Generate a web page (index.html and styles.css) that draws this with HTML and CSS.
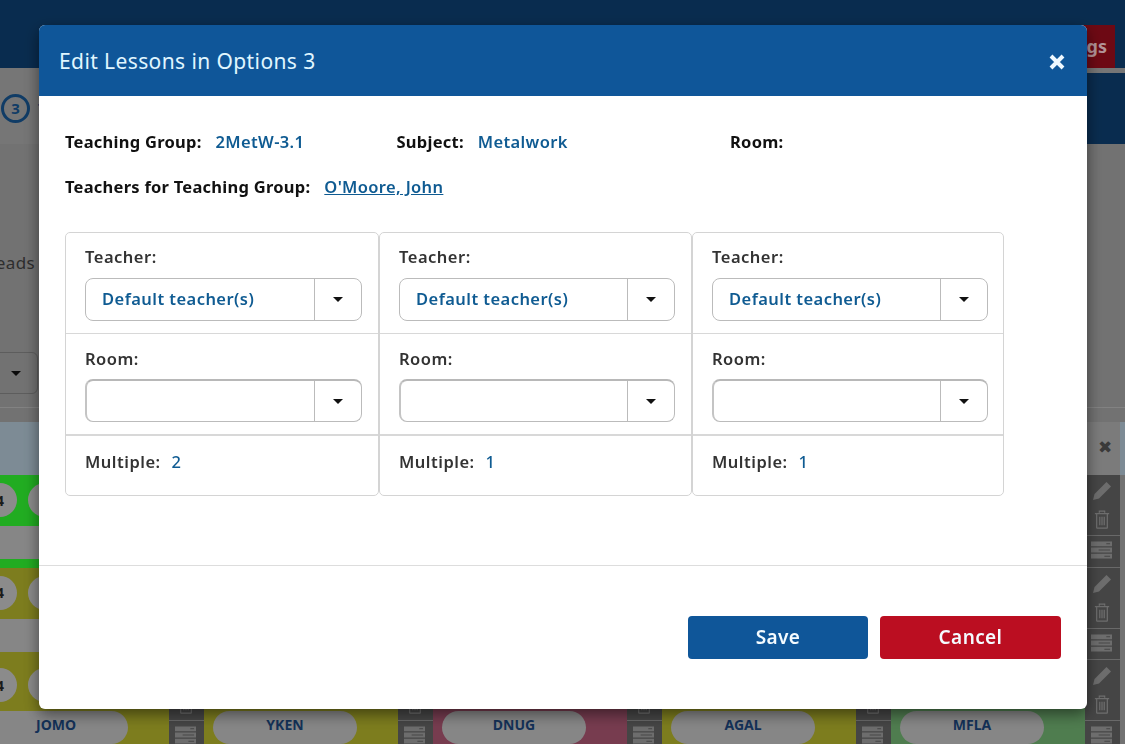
FILE: index.html
```html
<!DOCTYPE html>
<html lang="en">
<head>
<meta charset="utf-8">
<title>Edit Lessons in Options 3</title>
<link rel="stylesheet" href="styles.css">
</head>
<body>
<svg class="sprites" width="0" height="0" aria-hidden="true">
  <symbol id="pencil" viewBox="0 0 20 20"><path d="M14.500 1l4.500 4.500L7 17.500 1 19l1.500-6z" fill="currentColor"/></symbol>
  <symbol id="trash" viewBox="0 0 18 21"><path d="M6 3V1.200h6V3M1 4h16M3 4v15.500a.8.800 0 0 0 .8.800h10.400a.8.800 0 0 0 .8-.800V4M6.500 7.500v9.500M9 7.500v9.500M11.500 7.500v9.500" fill="none" stroke="currentColor" stroke-width="1.400"/></symbol>
  <symbol id="stack" viewBox="0 0 22 18"><path fill-rule="evenodd" d="M0 0h22v5H0zM16 2v1h4V2zM0 6.500h22v5H0zM8 8.500v1h12v-1zM0 13h22v5H0zM14 15v1h6v-1z" fill="currentColor"/></symbol>
</svg>
<div class="page">
  <header class="topbar"><div class="topbar-btn">Settings</div></header>
  <section class="steps">
    <div class="step"><span class="step-num">3</span><span class="step-label">Timetable</span></div>
    <div class="steps-right"></div>
  </section>
  <section class="filters">
    <div class="filter-label">Threads</div>
    <div class="filter-select"><span class="caret"></span></div>
    <div class="filter-line"></div>
  </section>
  <section class="table-head">
    <div class="table-head-main"></div>
    <div class="head-close">&#10006;</div>
  </section>
  <section class="lesson-row">
    <div class="lesson c-green"><div class="circles"><span class="circle">4</span><span class="circle"></span></div><div class="pill"></div></div>
    <div class="tools"></div>
    <div class="lesson c-green"></div><div class="tools"></div><div class="lesson c-olive"></div><div class="tools"></div><div class="lesson c-pink"></div><div class="tools"></div><div class="lesson c-olive"></div>
    <div class="tools"><svg class="t-pencil"><use href="#pencil"/></svg><svg class="t-trash"><use href="#trash"/></svg><span class="t-rule"></span><svg class="t-stack"><use href="#stack"/></svg></div>
  </section>
  <section class="lesson-row">
    <div class="lesson c-olive"><div class="circles"><span class="circle">4</span><span class="circle"></span></div><div class="pill"></div></div>
    <div class="tools"></div><div class="lesson c-olive"></div><div class="tools"></div><div class="lesson c-olive"></div><div class="tools"></div><div class="lesson c-olive"></div><div class="tools"></div><div class="lesson c-olive"></div>
    <div class="tools"><svg class="t-pencil"><use href="#pencil"/></svg><svg class="t-trash"><use href="#trash"/></svg><span class="t-rule"></span><svg class="t-stack"><use href="#stack"/></svg></div>
  </section>
  <section class="lesson-row">
    <div class="lesson c-olive"><div class="circles"><span class="circle">4</span><span class="circle"></span></div><div class="pill">JOMO</div></div>
    <div class="tools"><svg class="t-pencil"><use href="#pencil"/></svg><svg class="t-trash"><use href="#trash"/></svg><span class="t-rule"></span><svg class="t-stack"><use href="#stack"/></svg></div>
    <div class="lesson c-olive"><div class="circles"></div><div class="pill">YKEN</div></div>
    <div class="tools"><svg class="t-pencil"><use href="#pencil"/></svg><svg class="t-trash"><use href="#trash"/></svg><span class="t-rule"></span><svg class="t-stack"><use href="#stack"/></svg></div>
    <div class="lesson c-pink"><div class="circles"></div><div class="pill">DNUG</div></div>
    <div class="tools"><svg class="t-pencil"><use href="#pencil"/></svg><svg class="t-trash"><use href="#trash"/></svg><span class="t-rule"></span><svg class="t-stack"><use href="#stack"/></svg></div>
    <div class="lesson c-olive"><div class="circles"></div><div class="pill">AGAL</div></div>
    <div class="tools"><svg class="t-pencil"><use href="#pencil"/></svg><svg class="t-trash"><use href="#trash"/></svg><span class="t-rule"></span><svg class="t-stack"><use href="#stack"/></svg></div>
    <div class="lesson c-sage"><div class="circles"></div><div class="pill">MFLA</div></div>
    <div class="tools"><svg class="t-pencil"><use href="#pencil"/></svg><svg class="t-trash"><use href="#trash"/></svg><span class="t-rule"></span><svg class="t-stack"><use href="#stack"/></svg></div>
  </section>
</div>

<div class="backdrop"></div>

<div class="modal">
  <div class="modal-head">
    <h1 class="modal-title">Edit Lessons in Options 3</h1>
    <svg class="modal-close" viewBox="0 0 18 18" aria-label="Close"><path d="M3 3l12 12M15 3L3 15" fill="none" stroke="currentColor" stroke-width="4"/></svg>
  </div>
  <div class="modal-body">
    <div class="info-row">
      <div class="info info-group"><b>Teaching Group:</b><span class="val">2MetW-3.1</span></div>
      <div class="info info-subject"><b>Subject:</b><span class="val">Metalwork</span></div>
      <div class="info"><b>Room:</b></div>
    </div>
    <div class="info-row">
      <div class="info"><b>Teachers for Teaching Group:</b><a class="val link" href="#">O'Moore, John</a></div>
    </div>
    <div class="cards">
      <div class="card">
        <div class="card-sec"><label>Teacher:</label><div class="combo"><span class="combo-text">Default teacher(s)</span><span class="combo-btn"><span class="caret"></span></span></div></div>
        <div class="card-sec"><label>Room:</label><div class="combo combo-empty"><span class="combo-text"></span><span class="combo-btn"><span class="caret"></span></span></div></div>
        <div class="card-sec card-foot"><label>Multiple:</label><span class="val">2</span></div>
      </div>
      <div class="card">
        <div class="card-sec"><label>Teacher:</label><div class="combo"><span class="combo-text">Default teacher(s)</span><span class="combo-btn"><span class="caret"></span></span></div></div>
        <div class="card-sec"><label>Room:</label><div class="combo combo-empty"><span class="combo-text"></span><span class="combo-btn"><span class="caret"></span></span></div></div>
        <div class="card-sec card-foot"><label>Multiple:</label><span class="val">1</span></div>
      </div>
      <div class="card">
        <div class="card-sec"><label>Teacher:</label><div class="combo"><span class="combo-text">Default teacher(s)</span><span class="combo-btn"><span class="caret"></span></span></div></div>
        <div class="card-sec"><label>Room:</label><div class="combo combo-empty"><span class="combo-text"></span><span class="combo-btn"><span class="caret"></span></span></div></div>
        <div class="card-sec card-foot"><label>Multiple:</label><span class="val">1</span></div>
      </div>
    </div>
  </div>
  <div class="modal-foot">
    <button class="btn btn-save">Save</button>
    <button class="btn btn-cancel">Cancel</button>
  </div>
</div>
</body>
</html>
```
FILE: styles.css
```css
* { box-sizing: border-box; }
html, body { margin: 0; height: 744px; overflow: hidden; }
body { font-family: "Noto Sans", "DejaVu Sans", sans-serif; background: #a4a4a4; }
.sprites { position: absolute; }

/* page behind the dialog */
.page { width: 1125px; height: 744px; overflow: hidden; }
.topbar { height: 68px; background: #0e4072; display: flex; justify-content: flex-end; align-items: flex-end; padding-right: 10px; }
.topbar-btn { height: 43px; width: 110px; flex: none; background: #9d0e1d; color: #ffd3d9; font-weight: 700; font-size: 18px; line-height: 42px; text-align: right; padding-right: 8px; white-space: nowrap; }
.steps { height: 76px; display: flex; background: #a9a9a9; }
.step { flex: 1; display: flex; align-items: center; padding-left: 1px; gap: 8px; padding-top: 4px; }
.step-num { width: 29px; height: 29px; border: 3px solid #175692; border-radius: 50%; color: #175692; font-weight: 700; font-size: 15px; display: flex; align-items: center; justify-content: center; }
.step-label { font-size: 15px; color: #175692; font-weight: 700; }
.steps-right { width: 38px; margin-top: 5px; background: #0e4072; }
.filters { height: 278px; background: #a4a4a4; position: relative; padding-top: 107px; }
.filter-label { font-size: 17px; color: #424242; margin-left: -32px; letter-spacing: .4px; }
.filter-select { position: absolute; left: -30px; top: 208px; width: 68px; height: 42px; border: 1px solid #868686; border-radius: 6px; display: flex; align-items: center; justify-content: flex-end; padding-right: 16px; }
.filter-line { position: absolute; left: 0; right: 0; top: 263px; border-top: 1px solid #bababa; }
.table-head { height: 53px; background: #b3c8d6; display: flex; }
.table-head-main { flex: 1; }
.head-close { width: 33px; color: #535353; font-size: 17px; line-height: 50px; text-align: center; padding-left: 3px; background: #b1b1b1; margin-right: 5px; }
.lesson-row { height: 92.5px; margin-left: -25px; display: flex; }
.lesson { width: 194px; flex: none; padding-top: 8px; }
.tools { width: 35px; flex: none; background: #646464; color: #9d9d9d; border-bottom: 1px solid #979797; display: flex; flex-direction: column; align-items: center; padding-right: 2px; }
.t-pencil { width: 20px; height: 20px; margin-top: 6px; }
.t-trash { width: 16px; height: 19px; margin-top: 9px; }
.t-rule { align-self: stretch; margin-right: -2px; height: 1px; background: #979797; margin-top: 6px; flex: none; }
.t-stack { width: 21px; height: 18px; margin-top: 5px; }
.c-green { background: #30f630; }
.c-olive { background: #b3b32b; }
.c-pink { background: #ab5672; }
.c-sage { background: #72b372; }
.circles { height: 34px; display: flex; gap: 11px; padding-left: 8px; }
.circle { width: 34px; height: 34px; flex: none; border-radius: 50%; background: #c8c8c8; color: #282828; font-weight: 700; font-size: 14px; display: flex; align-items: center; justify-content: center; }
.pill { height: 33px; margin: 9px 0 0 9px; width: 144px; border-radius: 17px; background: #c1c1c1; color: #1c477e; font-weight: 700; font-size: 14px; line-height: 27px; text-align: center; white-space: nowrap; }

.backdrop { position: fixed; inset: 0; background: rgba(0, 0, 0, .3); }

/* dialog */
.modal { position: fixed; left: 39px; top: 25px; width: 1048px; height: 684px; background: #fff; border-radius: 6px; box-shadow: 0 5px 15px rgba(0, 0, 0, .5); display: flex; flex-direction: column; overflow: hidden; color: #111; }
.modal-head { height: 71px; background: #0f5699; color: #e0f6ff; display: flex; align-items: center; justify-content: space-between; padding: 0 21px 0 20px; flex: none; }
.modal-title { margin: 0; font-size: 21px; font-weight: 400; letter-spacing: .4px; line-height: 70px; }
.modal-close { width: 18px; height: 18px; color: #eef8ff; margin-top: 2px; }
.modal-body { flex: 1; padding: 36px 26px 0; border-bottom: 1px solid #ddd; }
.info-row { display: flex; height: 45px; align-items: flex-start; font-size: 16.5px; line-height: 20px; letter-spacing: .25px; }
.info-group { width: 331.5px; }
.info-subject { width: 333.5px; }
.info b { font-weight: 700; }
.val { color: #0f5b92; margin-left: 14px; font-weight: 600; letter-spacing: .35px; }
.link { text-decoration: underline; }
.cards { display: flex; margin-top: 10px; width: 940px; }
.card { width: 313px; height: 264px; border: 1px solid #d4d4d4; border-radius: 5px; flex: none; }
.card:first-child { width: 314px; }
.card:last-child { width: 312px; }
.card-sec { height: 102px; border-bottom: 1px solid #d8d8d8; padding: 15px 16px 0 19px; }
.card:last-child .card-sec { padding-right: 15px; }
.card-sec:first-child { height: 101px; padding-top: 14px; }
.card-sec:nth-child(2) { border-bottom-width: 2px; }
.card-sec label { display: block; font-size: 16.5px; line-height: 20px; color: #333; font-weight: 600; letter-spacing: .5px; }
.combo { margin-top: 10px; height: 43px; border: 1px solid #bbb; border-radius: 8px; display: flex; font-size: 16.5px; color: #0f5b92; font-weight: 600; letter-spacing: .45px; }
.card-sec:first-child .combo { margin-top: 11px; }
.combo-empty { border-top: 2px solid #b8b8b8; border-left: 2px solid #c4c4c4; }
.combo-text { flex: 1; padding: 0 16px; line-height: 40px; white-space: nowrap; }
.combo-btn { width: 47px; border-left: 1px solid #bbb; display: flex; align-items: center; justify-content: center; }
.caret { width: 0; height: 0; border-left: 5px solid transparent; border-right: 5px solid transparent; border-top: 5px solid #111; }
.card-foot { border-bottom: 0; height: 58px; padding-top: 16px; display: flex; }
.card-foot .val { font-weight: 500; font-size: 16.5px; line-height: 20px; margin-left: 11px; }
.modal-foot { height: 143px; flex: none; display: flex; justify-content: flex-end; gap: 12px; padding: 50px 26px 0 0; }
.btn { width: 181px; height: 43px; border: 0; border-radius: 4px; color: #f4fbff; font-family: inherit; font-size: 19px; font-weight: 600; padding-bottom: 3px; letter-spacing: .4px; }
.btn-save { background: #0f5699; width: 180px; }
.btn-cancel { background: #bb0e21; }
```
